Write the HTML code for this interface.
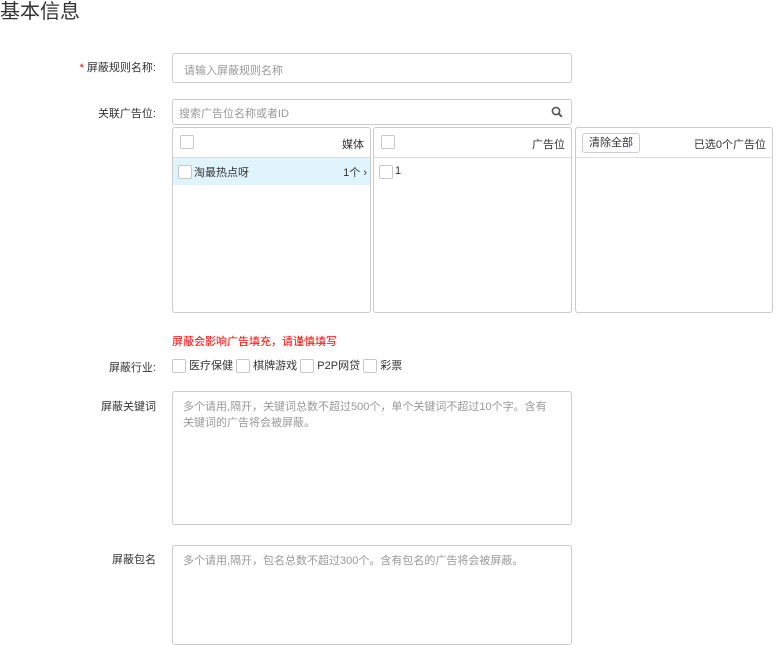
<!DOCTYPE html>
<html><head><meta charset="utf-8"><style>
*{box-sizing:border-box;margin:0;padding:0}
body{width:778px;height:624px;overflow:hidden;background:#fff;font-family:"Liberation Sans","Noto Sans CJK SC",sans-serif;font-size:11px;color:#333;position:relative}
.a{position:absolute}
.lbl{position:absolute;right:622px;text-align:right;white-space:nowrap;color:#333}
.box{position:absolute;border:1px solid #ccc;border-radius:3px;background:#fff}
.ph{color:#999}
.cb{display:inline-block;width:14px;height:14px;border:1px solid #c8c8c8;border-radius:2px;background:#fff;vertical-align:middle}
.hr{position:absolute;left:0;right:0;top:29px;border-top:1px solid #ddd}
</style></head><body>
<div class="a" style="left:0;top:0;font-size:20px;color:#333;line-height:24px">基本信息</div>

<div class="lbl" style="top:59px"><span style="color:#e00">*</span> 屏蔽规则名称:</div>
<div class="box" style="left:172px;top:53px;width:400px;height:30px"><span class="a ph" style="left:11px;top:8px">请输入屏蔽规则名称</span></div>

<div class="lbl" style="top:105px">关联广告位:</div>
<div class="box" style="left:172px;top:99px;width:400px;height:26px"><span class="a ph" style="left:6px;top:5px">搜索广告位名称或者ID</span>
<svg class="a" style="right:8px;top:6px" width="12" height="12" viewBox="0 0 12 12"><circle cx="5" cy="5" r="3.6" fill="none" stroke="#555" stroke-width="1.6"/><path d="M7.6 7.6L10.8 10.8" stroke="#555" stroke-width="2"/></svg></div>

<div class="box" style="left:172px;top:127px;width:199px;height:186px">
<span class="cb a" style="left:7px;top:7px"></span><span class="a" style="right:6px;top:8px">媒体</span>
<div class="hr"></div>
<div class="a" style="left:0;right:0;top:30px;height:27px;background:#dff4fb"></div>
<span class="cb a" style="left:5px;top:37px"></span><span class="a" style="left:21px;top:36px">淘最热点呀</span><span class="a" style="right:3px;top:36px">1个 ›</span>
</div>
<div class="box" style="left:373px;top:127px;width:199px;height:186px">
<span class="cb a" style="left:7px;top:7px"></span><span class="a" style="right:6px;top:8px">广告位</span>
<div class="hr"></div>
<span class="cb a" style="left:5px;top:37px"></span><span class="a" style="left:21px;top:37px">1</span>
</div>
<div class="box" style="left:575px;top:127px;width:198px;height:186px">
<span class="a" style="left:6px;top:5px;border:1px solid #ccd;border-radius:3px;padding:2px 6px;line-height:14px">清除全部</span><span class="a" style="right:6px;top:8px">已选0个广告位</span>
<div class="hr"></div>
</div>

<div class="a" style="left:172px;top:333px;color:#f00;font-size:11px">屏蔽会影响广告填充，请谨慎填写</div>

<div class="lbl" style="top:359px">屏蔽行业:</div>
<div class="a" style="left:172px;top:358px;white-space:nowrap;line-height:16px">
<span class="cb"></span> 医疗保健 <span class="cb"></span> 棋牌游戏 <span class="cb"></span> P2P网贷 <span class="cb"></span> 彩票</div>

<div class="lbl" style="top:398px">屏蔽关键词</div>
<div class="box" style="left:172px;top:391px;width:400px;height:134px"><div class="a ph" style="left:10px;top:7px;right:14px;line-height:16px">多个请用,隔开，关键词总数不超过500个，单个关键词不超过10个字。含有关键词的广告将会被屏蔽。</div></div>

<div class="lbl" style="top:551px">屏蔽包名</div>
<div class="box" style="left:172px;top:545px;width:400px;height:100px"><div class="a ph" style="left:10px;top:7px;right:10px;line-height:16px">多个请用,隔开，包名总数不超过300个。含有包名的广告将会被屏蔽。</div></div>
</body></html>
